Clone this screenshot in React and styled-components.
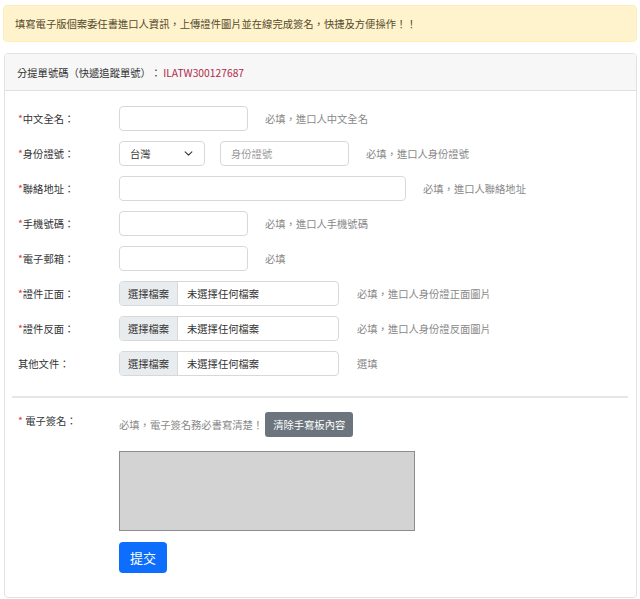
import React from 'react'
import styled, { createGlobalStyle } from 'styled-components'

const GlobalStyle = createGlobalStyle`
  body {
    margin: 0;
    background: #fff;
    font-family: "Noto Sans CJK TC", "Noto Sans", "Liberation Sans", sans-serif;
    font-size: 10.3px;
    color: #333;
  }
`

const fields = [
  { label: '中文全名', required: true, kind: 'text', width: 129, hint: '必填，進口人中文全名' },
  { label: '身份證號', required: true, kind: 'id', hint: '必填，進口人身份證號' },
  { label: '聯絡地址', required: true, kind: 'text', width: 287, hint: '必填，進口人聯絡地址' },
  { label: '手機號碼', required: true, kind: 'text', width: 129, hint: '必填，進口人手機號碼' },
  { label: '電子郵箱', required: true, kind: 'text', width: 129, hint: '必填' },
  { label: '證件正面', required: true, kind: 'file', hint: '必填，進口人身份證正面圖片' },
  { label: '證件反面', required: true, kind: 'file', hint: '必填，進口人身份證反面圖片' },
  { label: '其他文件', required: false, kind: 'file', hint: '選填' },
]

const App = () => {
  return (
    <Page>
      <GlobalStyle />
      <Alert>填寫電子版個案委任書進口人資訊，上傳證件圖片並在線完成簽名，快捷及方便操作！！</Alert>
      <Card>
        <CardHeader>
          分提單號碼<Paren>（</Paren>快遞追蹤單號<Paren>）</Paren>：<OrderNo>ILATW300127687</OrderNo>
        </CardHeader>
        <CardBody>
          {fields.map((f) => (
            <Row key={f.label}>
              <Label>
                {f.required && <Star>*</Star>}
                {f.label}：
              </Label>
              {f.kind === 'text' && <TextInput $width={f.width} type="text" />}
              {f.kind === 'id' && (
                <>
                  <SelectBox>
                    <span>台灣</span>
                    <svg width="9" height="9" viewBox="0 0 16 16">
                      <path d="M2 5l6 6 6-6" fill="none" stroke="#343a40" strokeWidth="2" strokeLinecap="round" strokeLinejoin="round" />
                    </svg>
                  </SelectBox>
                  <TextInput $width={129} type="text" placeholder="身份證號" />
                </>
              )}
              {f.kind === 'file' && (
                <FileInput>
                  <FileButton>選擇檔案</FileButton>
                  <FileName>未選擇任何檔案</FileName>
                </FileInput>
              )}
              <Hint>{f.hint}</Hint>
            </Row>
          ))}
          <Divider />
          <SignRow>
            <SignLabel>
              <Star>* </Star>電子簽名：
            </SignLabel>
            <SignColumn>
              <SignTop>
                <Hint $tight>必填，電子簽名務必書寫清楚！</Hint>
                <ClearButton type="button">清除手寫板內容</ClearButton>
              </SignTop>
              <SignPad />
              <SubmitButton type="button">提交</SubmitButton>
            </SignColumn>
          </SignRow>
        </CardBody>
      </Card>
    </Page>
  )
}

const Page = styled.div`
  padding: 5px 3px 2px 3px;
`

const Alert = styled.div`
  background: #fff3cd;
  border: 1px solid #ffeeba;
  border-radius: 4px;
  padding: 0 11px;
  height: 35px;
  display: flex;
  align-items: center;
  color: #554a2a;
  margin-bottom: 11px;
`

const Card = styled.div`
  border: 1px solid #e2e2e2;
  border-radius: 4px;
  margin-left: 1px;
  overflow: hidden;
`

const CardHeader = styled.div`
  background: #f7f7f7;
  border-bottom: 1px solid #dfdfdf;
  height: 36px;
  display: flex;
  align-items: center;
  padding-left: 12px;
  color: #333;
`

const Paren = styled.span`
  display: inline-block;
  width: 1em;
  text-align: center;
`

const OrderNo = styled.span`
  color: #b02a4a;
  margin-left: 2px;
`

const CardBody = styled.div`
  padding: 15px 4px 24px 3px;
`

const Row = styled.div`
  display: flex;
  align-items: center;
  height: 25px;
  margin-bottom: 10px;
  padding-left: 10px;
`

const Label = styled.div`
  width: 101px;
  flex-shrink: 0;
  color: #333;
`

const Star = styled.span`
  color: #dc3545;
  white-space: pre;
`

const TextInput = styled.input`
  box-sizing: border-box;
  width: ${(p) => p.$width}px;
  height: 25px;
  border: 1px solid #d6d9dc;
  border-radius: 4px;
  padding: 0 10px;
  margin-right: 15px;
  font: inherit;
  color: #333;
  &::placeholder {
    color: #9a9a9a;
  }
`

const SelectBox = styled.div`
  box-sizing: border-box;
  width: 86px;
  height: 25px;
  border: 1px solid #d6d9dc;
  border-radius: 4px;
  padding: 0 11px 0 10px;
  margin-right: 15px;
  display: flex;
  align-items: center;
  justify-content: space-between;
  color: #333;
`

const FileInput = styled.div`
  box-sizing: border-box;
  width: 220px;
  height: 25px;
  border: 1px solid #d6d9dc;
  border-radius: 4px;
  display: flex;
  overflow: hidden;
  margin-right: 16px;
`

const FileButton = styled.div`
  width: 57px;
  background: #e9ecef;
  border-right: 1px solid #d6d9dc;
  display: flex;
  align-items: center;
  justify-content: center;
  color: #333;
`

const FileName = styled.div`
  display: flex;
  align-items: center;
  padding-left: 9px;
  color: #333;
`

const Hint = styled.span`
  color: #888;
  margin-left: ${(p) => (p.$tight ? 0 : 2)}px;
  white-space: nowrap;
`

const Divider = styled.div`
  height: 2px;
  background: #e6e6e6;
  margin: 20px 4px 14px 4px;
`

const SignRow = styled.div`
  display: flex;
  padding-left: 10px;
`

const SignLabel = styled.div`
  width: 101px;
  flex-shrink: 0;
  padding-top: 1px;
  color: #333;
`

const SignColumn = styled.div`
  display: flex;
  flex-direction: column;
  align-items: flex-start;
`

const SignTop = styled.div`
  display: flex;
  align-items: center;
  gap: 2px;
`

const ClearButton = styled.button`
  height: 25px;
  padding: 0 8px;
  border: none;
  border-radius: 3px;
  background: #6c757d;
  color: #fff;
  font: inherit;
`

const SignPad = styled.div`
  box-sizing: border-box;
  width: 296px;
  height: 80px;
  margin-top: 14px;
  background: #d3d3d3;
  border: 1px solid #8c8c8c;
`

const SubmitButton = styled.button`
  margin-top: 11px;
  width: 48px;
  height: 31px;
  border: none;
  border-radius: 4px;
  background: #0d6efd;
  color: #fff;
  font-family: inherit;
  font-size: 13px;
  padding: 0;
`

export default App
